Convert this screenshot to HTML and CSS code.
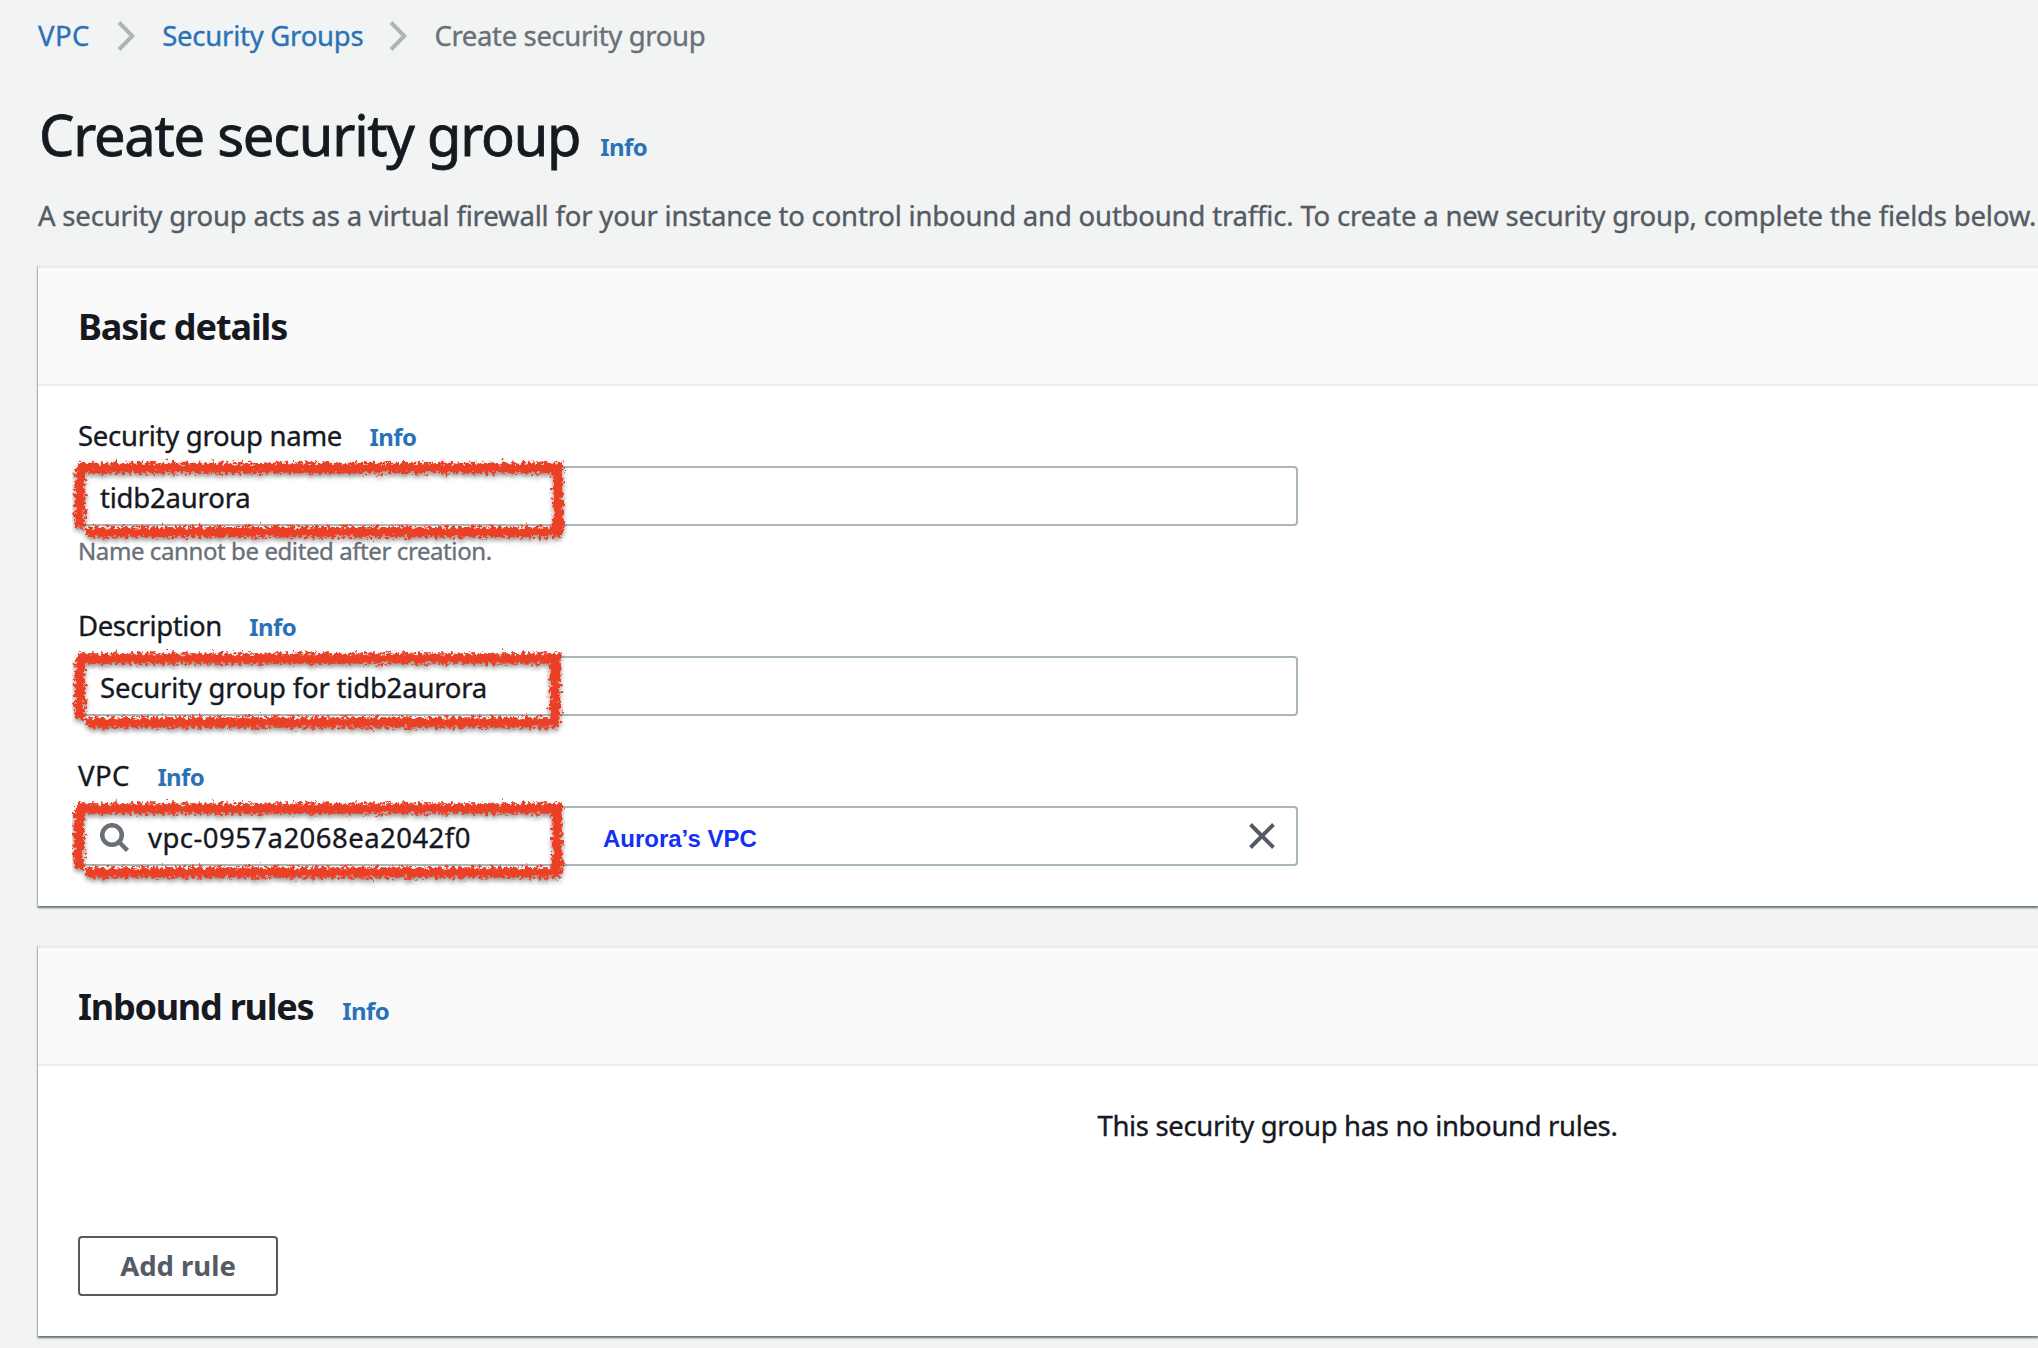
FILE: index.html
```html
<!DOCTYPE html>
<html lang="en">
<head>
<meta charset="utf-8">
<title>Create security group</title>
<link rel="stylesheet" href="styles.css">
</head>
<body>
<nav class="breadcrumb">
  <a class="crumb crumb-vpc">VPC</a>
  <svg class="chevron" viewBox="0 0 18 30"><path d="M2 1.500 15.300 15 2 28.500"/></svg>
  <a class="crumb crumb-groups">Security Groups</a>
  <svg class="chevron chevron-last" viewBox="0 0 18 30"><path d="M2 1.500 15.300 15 2 28.500"/></svg>
  <span class="crumb crumb-current">Create security group</span>
</nav>
<header class="page-header">
  <h1 class="page-title">Create security group</h1>
  <a class="info">Info</a>
</header>
<p class="page-desc">A security group acts as a virtual firewall for your instance to control inbound and outbound traffic. To create a new security group, complete the fields below.</p>

<section class="card">
  <div class="card-header"><h2 class="card-title">Basic details</h2></div>
  <div class="card-body form">
    <div class="field">
      <div class="label-row"><label class="label">Security group name</label><a class="info">Info</a></div>
      <div class="input"><span class="value">tidb2aurora</span>
        <svg class="marker" width="520" height="100"><g><path d="M7 17H492M15 81H491M8 16V77M486 17V83"/></g></svg>
      </div>
      <div class="hint">Name cannot be edited after creation.</div>
    </div>
    <div class="field">
      <div class="label-row"><label class="label label-desc">Description</label><a class="info">Info</a></div>
      <div class="input"><span class="value">Security group for tidb2aurora</span>
        <svg class="marker" width="520" height="100"><g><path d="M7 17.500H489M15 81.500H488M8 17V78M483 18V83"/></g></svg>
      </div>
    </div>
    <div class="field">
      <div class="label-row"><label class="label label-vpc">VPC</label><a class="info">Info</a></div>
      <div class="input">
        <svg class="search" viewBox="0 0 30 30"><circle cx="12" cy="12" r="9.800"/><path d="M18.500 18.500 27.500 27.500"/></svg>
        <span class="value value-vpc">vpc-0957a2068ea2042f0</span>
        <span class="note">Aurora’s VPC</span>
        <svg class="clear" viewBox="0 0 26 26"><path d="M1.500 1.500 24.500 24.500M24.500 1.500 1.500 24.500"/></svg>
        <svg class="marker" width="520" height="100"><g><path d="M6 17.500H491M14 81.500H490M7 17V78M485 18V83"/></g></svg>
      </div>
    </div>
  </div>
</section>

<section class="card">
  <div class="card-header"><h2 class="card-title card-title-rules">Inbound rules</h2><a class="info">Info</a></div>
  <div class="card-body rules">
    <p class="empty">This security group has no inbound rules.</p>
    <button class="button">Add rule</button>
  </div>
</section>
<svg class="defs" width="0" height="0">
  <filter id="chalk" filterUnits="userSpaceOnUse" x="-5" y="-5" width="520" height="110">
    <feTurbulence type="fractalNoise" baseFrequency="0.3" numOctaves="3" seed="4" result="n"/>
    <feDisplacementMap in="SourceGraphic" in2="n" scale="12" xChannelSelector="R" yChannelSelector="G" result="rough"/>
    <feDropShadow in="rough" dx="0" dy="3" stdDeviation="2" flood-color="#000" flood-opacity="0.400"/>
  </filter>
</svg>
</body>
</html>
```
FILE: styles.css
```css
* { box-sizing: border-box; }
body {
  margin: 0;
  height: 1348px;
  overflow: hidden;
  background: #f2f3f3;
  color: #16191f;
  font: 27.5px/40px "Noto Sans", "Open Sans", sans-serif;
  -webkit-text-stroke: 0.35px currentColor;
}
h1, h2, p { margin: 0; font-weight: 400; }
.breadcrumb { display: flex; align-items: center; height: 40px; margin-top: 16px; padding-left: 38px; white-space: nowrap; }
.crumb { color: #2a72b8; }
.crumb-vpc { letter-spacing: 0.4px; }
.crumb-groups { letter-spacing: -0.25px; }
.crumb-current { color: #687078; letter-spacing: -0.36px; }
.chevron { width: 18px; height: 30px; margin: 0 27.5px 0 27px; fill: none; stroke: #aab7b8; stroke-width: 4; }
.chevron-last { margin: 0 27px 0 26px; }
.page-header { display: flex; align-items: baseline; gap: 20px; height: 72px; margin-top: 42px; padding-left: 39px; }
.page-title { font-size: 56px; line-height: 72px; letter-spacing: -1.22px; -webkit-text-stroke-width: 0.8px; }
.info { color: #2a72b8; font-size: 24px; font-weight: 700; letter-spacing: -0.6px; -webkit-text-stroke-width: 0; }
.page-desc { margin-top: 24px; padding-left: 38px; height: 44px; line-height: 44px; color: #545b64; letter-spacing: -0.182px; white-space: nowrap; }
.card { margin: 28px 0 0 38px; background: #fff; border-top: 2px solid #eaeded; box-shadow: 0 2px 2px 0 rgba(0, 28, 36, 0.5), 0 1px 1px 1px rgba(0, 28, 36, 0.15); }
.card + .card { margin-top: 40px; }
.card-header { display: flex; align-items: baseline; gap: 29px; height: 118px; padding: 35px 40px 0; line-height: 48px; background: #fafafa; border-bottom: 2px solid #eaeded; }
.card-title { font-size: 36px; font-weight: 700; letter-spacing: -1.08px; -webkit-text-stroke-width: 0; }
.card-title-rules { letter-spacing: -1.24px; }
.form { padding: 30px 40px 40px; }
.field + .field { margin-top: 40px; }
.field:nth-child(2) { margin-top: 39px; }
.label-row { display: flex; align-items: baseline; gap: 27.5px; height: 40px; margin-bottom: 10px; }
.label { letter-spacing: -0.28px; }
.label-desc { letter-spacing: -0.38px; }
.label-vpc { letter-spacing: 0.45px; }
.input { position: relative; display: flex; align-items: center; width: 1220px; height: 60px; padding: 3px 21px 0 20px; border: 2px solid #aab7b8; border-radius: 4px; white-space: nowrap; }
.value { letter-spacing: -0.2px; }
.value-vpc { letter-spacing: 0.46px; }
.hint { height: 32px; margin-top: 9px; font-size: 24px; line-height: 32px; color: #687078; letter-spacing: -0.41px; }
.search { width: 30px; height: 30px; margin-right: 18px; fill: none; stroke: #687078; stroke-width: 4.5; }
.note { margin-left: 132px; padding-top: 3px; font: 700 24px/40px "Liberation Sans", Arial, sans-serif; color: #1430f5; -webkit-text-stroke-width: 0; }
.clear { width: 26px; height: 26px; margin: 0 0 3px auto; stroke: #545b64; stroke-width: 4; }
.marker { position: absolute; left: -8px; top: -17px; fill: none; stroke: #ec4127; stroke-width: 10.5; }
.marker g { filter: url(#chalk); }
.rules { padding: 40px 40px 40px; height: 270px; }
.empty { padding-left: 639px; text-align: center; letter-spacing: -0.35px; }
.button { display: block; width: 200px; height: 60px; margin-top: 90px; padding: 0; background: #fff; border: 2px solid #545b64; border-radius: 4px; color: #545b64; font: 700 27.5px/56px "Noto Sans", "Open Sans", sans-serif; -webkit-text-stroke-width: 0; }
.defs { position: absolute; }
```
